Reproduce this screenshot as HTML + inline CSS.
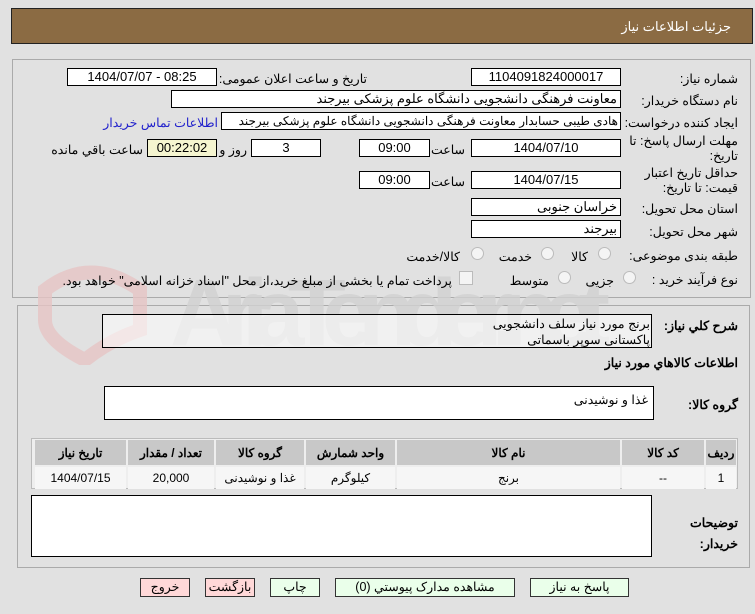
<!DOCTYPE html>
<html><head><meta charset="utf-8"><style>
body{margin:0;width:755px;height:614px;background:#e1e1e1;font-family:Tahoma,"Liberation Sans","Noto Sans CJK SC",sans-serif;font-size:12px;color:#000;position:relative;overflow:hidden;direction:rtl}
.a{position:absolute;white-space:nowrap}
.b{position:absolute;background:#fff;border:1px solid #000;box-sizing:border-box;text-align:center;line-height:16px;font-size:13px;direction:ltr}
.r{text-align:right;padding-right:3px;direction:rtl;overflow:hidden}
.l{position:absolute;white-space:nowrap;text-align:right;font-size:12.5px}
.btn{position:absolute;border:1px solid #333;box-sizing:border-box;text-align:center;font-size:12.5px;line-height:16px;height:19px}
.rad{position:absolute;width:11px;height:11px;border:1px solid #bbb;border-radius:50%;background:#f4f4f4}
table{border-collapse:separate;border-spacing:2px}
td{text-align:center;height:20px;font-size:12px}
th{background:#c8c8c8;height:23px;font-size:12px}
</style></head><body>
<div class="a" style="left:11px;top:8px;width:742px;height:36px;background:#8b6b43;border:1px solid #222;box-sizing:border-box"></div>
<div class="a" style="right:24px;top:19px;color:#fff;font-size:13px">جزئیات اطلاعات نیاز</div>

<div class="a" style="left:12px;top:59px;width:739px;height:239px;border:1px solid #aaa;box-sizing:border-box"></div>
<div class="a" style="left:17px;top:305px;width:733px;height:263px;border:1px solid #aaa;box-sizing:border-box"></div>

<!-- watermark -->
<svg class="a" style="left:15px;top:240px;direction:ltr" width="600" height="125" viewBox="0 0 600 125">
<path d="M30 50 Q75 15 125 50 L125 90 Q95 100 70 120 Q30 100 30 80 Z" fill="none" stroke="#e6c4c4" stroke-width="14" opacity=".8"/>
<text x="155" y="105" font-size="95" font-family="Liberation Sans" font-weight="bold" fill="#d2d2d2" opacity=".8" textLength="440">AriaTender.net</text>
</svg>

<div class="l" style="right:17px;top:71px">شماره نیاز:</div>
<div class="b" style="left:471px;top:68px;width:150px;height:18px">1104091824000017</div>
<div class="l" style="right:388px;top:71px">تاریخ و ساعت اعلان عمومی:</div>
<div class="b" style="left:67px;top:68px;width:150px;height:18px">1404/07/07 - 08:25</div>

<div class="l" style="right:17px;top:93px">نام دستگاه خریدار:</div>
<div class="b r" style="left:171px;top:90px;width:450px;height:18px">معاونت فرهنگی دانشجویی دانشگاه علوم پزشکی بیرجند</div>

<div class="l" style="right:17px;top:115px">ایجاد کننده درخواست:</div>
<div class="b r" style="left:221px;top:112px;width:400px;height:18px;font-size:12px;padding-right:2px">هادی طیبی حسابدار معاونت فرهنگی دانشجویی دانشگاه علوم پزشکی بیرجند</div>
<div class="l" style="right:537px;top:115px;color:#2222cc">اطلاعات تماس خریدار</div>

<div class="l" style="right:17px;top:134px;line-height:15px">مهلت ارسال پاسخ: تا<br>تاریخ:</div>
<div class="b" style="left:471px;top:139px;width:150px;height:18px">1404/07/10</div>
<div class="l" style="right:290px;top:142px">ساعت</div>
<div class="b" style="left:359px;top:139px;width:71px;height:18px">09:00</div>
<div class="b" style="left:251px;top:139px;width:70px;height:18px">3</div>
<div class="l" style="right:508px;top:142px">روز و</div>
<div class="b" style="left:147px;top:139px;width:70px;height:18px;background:#f5f5d0">00:22:02</div>
<div class="l" style="right:612px;top:142px">ساعت باقي مانده</div>

<div class="l" style="right:17px;top:166px;line-height:15px">حداقل تاریخ اعتبار<br>قیمت: تا تاریخ:</div>
<div class="b" style="left:471px;top:171px;width:150px;height:18px">1404/07/15</div>
<div class="l" style="right:290px;top:174px">ساعت</div>
<div class="b" style="left:359px;top:171px;width:71px;height:18px">09:00</div>

<div class="l" style="right:17px;top:201px">استان محل تحویل:</div>
<div class="b r" style="left:471px;top:198px;width:150px;height:18px">خراسان جنوبی</div>
<div class="l" style="right:17px;top:224px">شهر محل تحویل:</div>
<div class="b r" style="left:471px;top:220px;width:150px;height:18px">بیرجند</div>

<div class="l" style="right:17px;top:248px">طبقه بندی موضوعی:</div>
<div class="rad" style="left:598px;top:247px"></div><div class="l" style="right:167px;top:249px">کالا</div>
<div class="rad" style="left:541px;top:247px"></div><div class="l" style="right:223px;top:249px">خدمت</div>
<div class="rad" style="left:471px;top:247px"></div><div class="l" style="right:295px;top:249px">کالا/خدمت</div>

<div class="l" style="right:17px;top:272px">نوع فرآیند خرید :</div>
<div class="rad" style="left:623px;top:271px"></div><div class="l" style="right:141px;top:273px">جزیی</div>
<div class="rad" style="left:558px;top:271px"></div><div class="l" style="right:206px;top:273px">متوسط</div>
<div class="a" style="left:459px;top:271px;width:12px;height:12px;border:1px solid #bbb;background:#f4f4f4"></div>
<div class="l" style="right:303px;top:273px">پرداخت تمام یا بخشی از مبلغ خرید،از محل "اسناد خزانه اسلامی" خواهد بود.</div>

<div class="l" style="right:17px;top:318px;font-weight:bold">شرح کلي نیاز:</div>
<div class="a" style="left:102px;top:314px;width:550px;height:34px;border:1px solid #000;box-sizing:border-box;background:rgba(255,255,255,.55)"></div>
<div class="l" style="right:105px;top:316px;line-height:16px">برنج مورد نیاز سلف دانشجویی<br>پاکستانی سوپر باسماتی</div>

<div class="l" style="right:17px;top:355px;font-weight:bold">اطلاعات کالاهاي مورد نیاز</div>

<div class="l" style="right:17px;top:397px;font-weight:bold">گروه کالا:</div>
<div class="a" style="left:104px;top:386px;width:550px;height:34px;border:1px solid #000;box-sizing:border-box;background:#fff"></div>
<div class="l" style="right:107px;top:392px">غذا و نوشیدنی</div>

<div class="a" style="left:31px;top:438px;width:707px;height:51px;border:1px solid #bbb;box-sizing:border-box;background:#eee">
<table style="width:100%;margin:-1px">
<tr><th style="width:28px">ردیف</th><th style="width:80px">کد کالا</th><th>نام کالا</th><th style="width:87px">واحد شمارش</th><th style="width:86px">گروه کالا</th><th style="width:84px">تعداد / مقدار</th><th style="width:89px">تاریخ نیاز</th></tr>
<tr style="background:#f6f6f6"><td>1</td><td>--</td><td>برنج</td><td>کیلوگرم</td><td>غذا و نوشیدنی</td><td>20,000</td><td>1404/07/15</td></tr>
</table></div>

<div class="l" style="right:17px;top:513px;font-weight:bold;line-height:21px">توضیحات<br>خریدار:</div>
<div class="a" style="left:31px;top:495px;width:621px;height:62px;border:1px solid #000;box-sizing:border-box;background:#fff"></div>

<div class="btn" style="left:530px;top:578px;width:99px;background:#eaffea">پاسخ به نیاز</div>
<div class="btn" style="left:335px;top:578px;width:180px;background:#eaffea">مشاهده مدارک پیوستي (0)</div>
<div class="btn" style="left:270px;top:578px;width:50px;background:#eaffea">چاپ</div>
<div class="btn" style="left:205px;top:578px;width:50px;background:#ffd8d8">بازگشت</div>
<div class="btn" style="left:140px;top:578px;width:50px;background:#ffd8d8">خروج</div>
</body></html>
